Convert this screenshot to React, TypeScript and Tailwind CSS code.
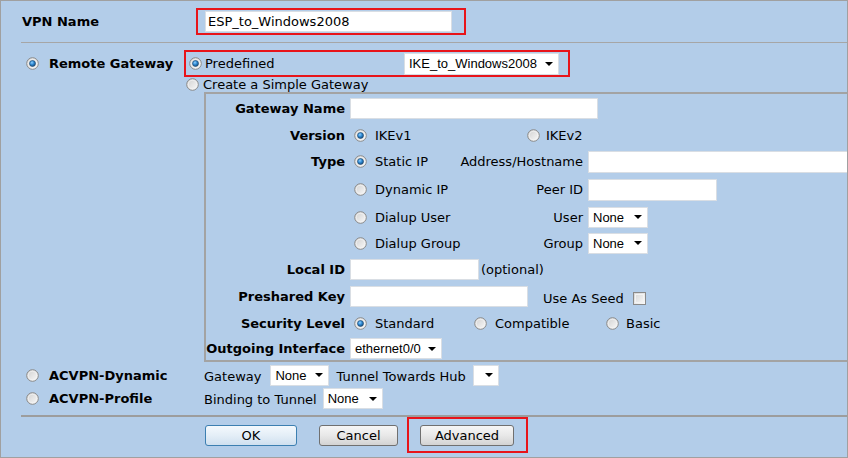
import React from "react";

function Radio({ checked = false, className = "" }: { checked?: boolean; className?: string }) {
  return (
    <svg width="13" height="13" viewBox="0 0 13 13" className={"shrink-0 " + className}>
      <defs>
        <linearGradient id="rbg" x1="0" y1="0" x2="1" y2="1">
          <stop offset="0" stopColor="#cfcfcf" />
          <stop offset="1" stopColor="#fbfbfb" />
        </linearGradient>
        <radialGradient id="rdot" cx="0.4" cy="0.35" r="0.7">
          <stop offset="0" stopColor="#8fd0ff" />
          <stop offset="0.5" stopColor="#2b86d0" />
          <stop offset="1" stopColor="#17456e" />
        </radialGradient>
      </defs>
      <circle cx="6.5" cy="6.5" r="5.8" fill="url(#rbg)" stroke="#8a8a8a" strokeWidth="1" />
      <circle cx="6.5" cy="6.5" r="4.3" fill="none" stroke="#f4f4f4" strokeWidth="0.8" />
      {checked && <circle cx="6.5" cy="6.5" r="3" fill="url(#rdot)" stroke="#1d4a73" strokeWidth="0.6" />}
    </svg>
  );
}

function Select({ value, className = "" }: { value: string; className?: string }) {
  return (
    <div
      className={
        "flex items-center justify-between bg-white border border-[#d9dee4] font-['Liberation_Sans',Arial,sans-serif] text-[13px] pl-[4px] pr-[5px] " +
        className
      }
    >
      <span className="whitespace-nowrap">{value}</span>
      <svg width="8" height="4" viewBox="0 0 8 4" className="shrink-0">
        <path d="M0 0 L8 0 L4 4 Z" fill="#000" />
      </svg>
    </div>
  );
}

function Input({ value = "", className = "" }: { value?: string; className?: string }) {
  return (
    <div className={"flex items-center bg-white border border-[#d9dee4] pl-[2px] " + className}>
      <span className="whitespace-nowrap">{value}</span>
    </div>
  );
}

function Label({ children }: { children: React.ReactNode }) {
  return <div className="w-[139px] shrink-0 text-right font-bold whitespace-nowrap flex justify-end">{children}</div>;
}

function Button({ children, primary = false, className = "" }: { children: React.ReactNode; primary?: boolean; className?: string }) {
  return (
    <div
      className={
        "flex items-center justify-center h-[21px] rounded-[3px] border " +
        (primary
          ? "border-[#3c7fb1] bg-gradient-to-b from-[#f4f9fd] via-[#e4eef7] to-[#cfe0ef] "
          : "border-[#707070] bg-gradient-to-b from-[#f6f6f6] via-[#e8e8e8] to-[#d3d3d3] ") +
        className
      }
    >
      {children}
    </div>
  );
}

export default function App() {
  return (
    <div className="w-[848px] h-[458px] overflow-hidden border border-[#a0a0a0] bg-[#b3cde9] font-['DejaVu_Sans',Verdana,sans-serif] text-[13px] leading-none text-black">
      {/* VPN Name */}
      <div className="flex items-center h-[41px] pl-[21px]">
        <div className="w-[174px] font-bold">VPN Name</div>
        <div className="w-[270px] h-[27px] border-2 border-[#e8141a] flex items-center pl-[7px]">
          <Input value="ESP_to_Windows2008" className="w-[247px] h-[21px]" />
        </div>
      </div>
      <div className="ml-[20px] h-[1px] bg-[#a6a6a6]" />

      {/* Remote Gateway */}
      <div className="flex items-center h-[27px] mt-[7px]">
        <div className="w-[183px] flex items-center pl-[25px]">
          <Radio checked />
          <span className="ml-[10px] font-bold whitespace-nowrap">Remote Gateway</span>
        </div>
        <div className="w-[386px] h-[27px] border-2 border-[#e8141a] flex items-center pl-[3px]">
          <Radio checked />
          <span className="ml-[3px] w-[199px]">Predefined</span>
          <Select value="IKE_to_Windows2008" className="w-[155px] h-[22px]" />
        </div>
      </div>
      <div className="flex items-center h-[14px] pl-[185px]">
        <Radio />
        <span className="ml-[4px] whitespace-nowrap">Create a Simple Gateway</span>
      </div>

      {/* Simple gateway box */}
      <div className="mt-[1px] ml-[203px] w-[700px] border-t-2 border-l-2 border-b-2 border-[#a3a3a3]">
        <div className="flex items-center h-[28px]">
          <Label>Gateway Name</Label>
          <Input className="ml-[5px] w-[248px] h-[21px]" />
        </div>
        <div className="flex items-center h-[26px]">
          <Label>Version</Label>
          <div className="ml-[5px] w-[173px] flex items-center">
            <Radio checked className="ml-[4px]" />
            <span className="ml-[8px]">IKEv1</span>
          </div>
          <Radio className="ml-[4px]" />
          <span className="ml-[6px]">IKEv2</span>
        </div>
        <div className="flex items-center h-[27px]">
          <Label>Type</Label>
          <div className="ml-[5px] w-[105px] flex items-center">
            <Radio checked className="ml-[4px]" />
            <span className="ml-[8px] whitespace-nowrap">Static IP</span>
          </div>
          <div className="w-[128px] text-right whitespace-nowrap flex justify-end">Address/Hostname</div>
          <Input className="ml-[5px] w-[262px] h-[22px]" />
        </div>
        <div className="flex items-center h-[29px]">
          <div className="w-[139px]" />
          <div className="ml-[5px] w-[105px] flex items-center">
            <Radio className="ml-[4px]" />
            <span className="ml-[8px] whitespace-nowrap">Dynamic IP</span>
          </div>
          <div className="w-[128px] text-right">Peer ID</div>
          <Input className="ml-[5px] w-[129px] h-[22px]" />
        </div>
        <div className="flex items-center h-[26px]">
          <div className="w-[139px]" />
          <div className="ml-[5px] w-[105px] flex items-center">
            <Radio className="ml-[4px]" />
            <span className="ml-[8px] whitespace-nowrap">Dialup User</span>
          </div>
          <div className="w-[128px] text-right">User</div>
          <Select value="None" className="ml-[5px] w-[60px] h-[21px]" />
        </div>
        <div className="flex items-center h-[26px]">
          <div className="w-[139px]" />
          <div className="ml-[5px] w-[105px] flex items-center">
            <Radio className="ml-[4px]" />
            <span className="ml-[8px] whitespace-nowrap">Dialup Group</span>
          </div>
          <div className="w-[128px] text-right">Group</div>
          <Select value="None" className="ml-[5px] w-[60px] h-[21px]" />
        </div>
        <div className="flex items-center h-[27px]">
          <Label>Local ID</Label>
          <Input className="ml-[5px] w-[129px] h-[21px]" />
          <span className="ml-[2px]">(optional)</span>
        </div>
        <div className="flex items-center h-[27px]">
          <Label>Preshared Key</Label>
          <Input className="ml-[5px] w-[178px] h-[21px]" />
          <span className="ml-[15px] mt-[3px] whitespace-nowrap">Use As Seed</span>
          <div className="ml-[9px] mt-[3px] w-[13px] h-[13px] border border-[#8a8a8a] bg-gradient-to-br from-[#d6d6d6] to-[#fafafa] p-[1px]">
            <div className="w-full h-full border border-[#f3f3f3]" />
          </div>
        </div>
        <div className="flex items-center h-[27px]">
          <Label>Security Level</Label>
          <div className="ml-[5px] w-[120px] flex items-center">
            <Radio checked className="ml-[4px]" />
            <span className="ml-[8px]">Standard</span>
          </div>
          <div className="w-[132px] flex items-center">
            <Radio className="ml-[4px]" />
            <span className="ml-[8px]">Compatible</span>
          </div>
          <Radio className="ml-[4px]" />
          <span className="ml-[7px]">Basic</span>
        </div>
        <div className="flex items-center h-[23px]">
          <Label>Outgoing Interface</Label>
          <Select value="ethernet0/0" className="ml-[5px] w-[92px] h-[21px]" />
        </div>
      </div>

      {/* ACVPN */}
      <div className="flex items-center h-[26px]">
        <div className="w-[203px] flex items-center pl-[25px]">
          <Radio />
          <span className="ml-[10px] font-bold whitespace-nowrap">ACVPN-Dynamic</span>
        </div>
        <span className="mt-[2px]">Gateway</span>
        <Select value="None" className="ml-[9px] w-[59px] h-[21px]" />
        <span className="ml-[7px] mt-[2px] whitespace-nowrap">Tunnel Towards Hub</span>
        <Select value="" className="ml-[7px] w-[26px] h-[21px]" />
      </div>
      <div className="flex items-center h-[21px]">
        <div className="w-[203px] flex items-center pl-[25px]">
          <Radio />
          <span className="ml-[10px] font-bold whitespace-nowrap">ACVPN-Profile</span>
        </div>
        <span className="mt-[2px] whitespace-nowrap">Binding to Tunnel</span>
        <Select value="None" className="ml-[6px] w-[60px] h-[21px]" />
      </div>
      <div className="mt-[6px] ml-[20px] h-[2px] bg-[#9d9d9d]" />

      {/* Buttons */}
      <div className="flex items-start pl-[204px]">
        <Button primary className="w-[92px] mt-[8px]">OK</Button>
        <Button className="ml-[22px] w-[79px] mt-[8px]">Cancel</Button>
        <div className="ml-[9px] w-[121px] h-[36px] border-2 border-[#e8141a] pl-[11px] pt-[6px]">
          <Button className="w-[94px]">Advanced</Button>
        </div>
      </div>
    </div>
  );
}
